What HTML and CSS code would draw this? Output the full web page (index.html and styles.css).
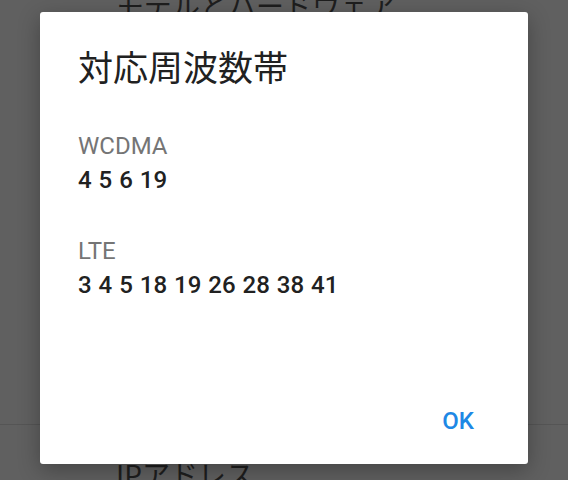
FILE: index.html
```html
<!DOCTYPE html>
<html lang="ja">
<head>
  <meta charset="UTF-8" />
  <meta name="viewport" content="width=device-width, initial-scale=1.0" />
  <title>端末情報</title>
  <link rel="stylesheet" href="styles.css">
</head>
<body>
  <div class="screen">
    <div class="pref-list">
      <div class="pref pref-first">
        <div class="pref-title">モデルとハードウェア</div>
      </div>
      <div class="pref-divider"></div>
      <div class="pref pref-last">
        <div class="pref-title">IPアドレス</div>
      </div>
    </div>

    <div class="dialog">
      <h1 class="dialog-title">対応周波数帯</h1>
      <div class="band-group">
        <div class="band-label">WCDMA</div>
        <div class="band-value">4 5 6 19</div>
      </div>
      <div class="band-group">
        <div class="band-label">LTE</div>
        <div class="band-value">3 4 5 18 19 26 28 38 41</div>
      </div>
      <div class="dialog-actions">
        <button class="dialog-button">OK</button>
      </div>
    </div>
  </div>
</body>
</html>
```

FILE: styles.css
```css
* { margin: 0; padding: 0; box-sizing: border-box; }
body {
  font-family: Roboto, "Noto Sans CJK JP", sans-serif;
  background: #606060;
  overflow: hidden;
}
.screen {
  position: relative;
  width: 568px;
  height: 480px;
  overflow: hidden;
  background: #606060;
}
.pref-list {
  display: flex;
  flex-direction: column;
}
.pref {
  padding-left: 116px;
}
.pref-title {
  font-family: "Noto Sans CJK JP", sans-serif;
  font-size: 28px;
  line-height: 40px;
  color: #1e1e1e;
}
.pref-first {
  margin-top: -15px;
  height: 439px;
}
.pref-divider {
  height: 1px;
  background: #555555;
}
.pref-last {
  padding-top: 29px;
}
.dialog {
  position: absolute;
  left: 40px;
  top: 12px;
  width: 488px;
  height: 452px;
  background: #fff;
  border-radius: 3px;
  box-shadow: 0 6px 22px rgba(0, 0, 0, 0.3);
  display: flex;
  flex-direction: column;
  padding: 33px 40px 26px 38px;
}
.dialog-title {
  font-family: "Noto Sans CJK JP", sans-serif;
  font-size: 35px;
  font-weight: 400;
  line-height: 42px;
  color: #212121;
  margin-bottom: 42px;
}
.band-group {
  margin-bottom: 37px;
}
.band-label {
  font-size: 24px;
  line-height: 34px;
  color: #757575;
}
.band-value {
  font-size: 24px;
  font-weight: 500;
  line-height: 34px;
  word-spacing: 1px;
  color: #212121;
}
.dialog-actions {
  margin-top: auto;
  display: flex;
  justify-content: flex-end;
}
.dialog-button {
  background: none;
  border: none;
  font-family: Roboto, sans-serif;
  font-size: 24px;
  font-weight: 500;
  line-height: 34px;
  padding: 0 14px;
  color: #1e88e5;
}
```
